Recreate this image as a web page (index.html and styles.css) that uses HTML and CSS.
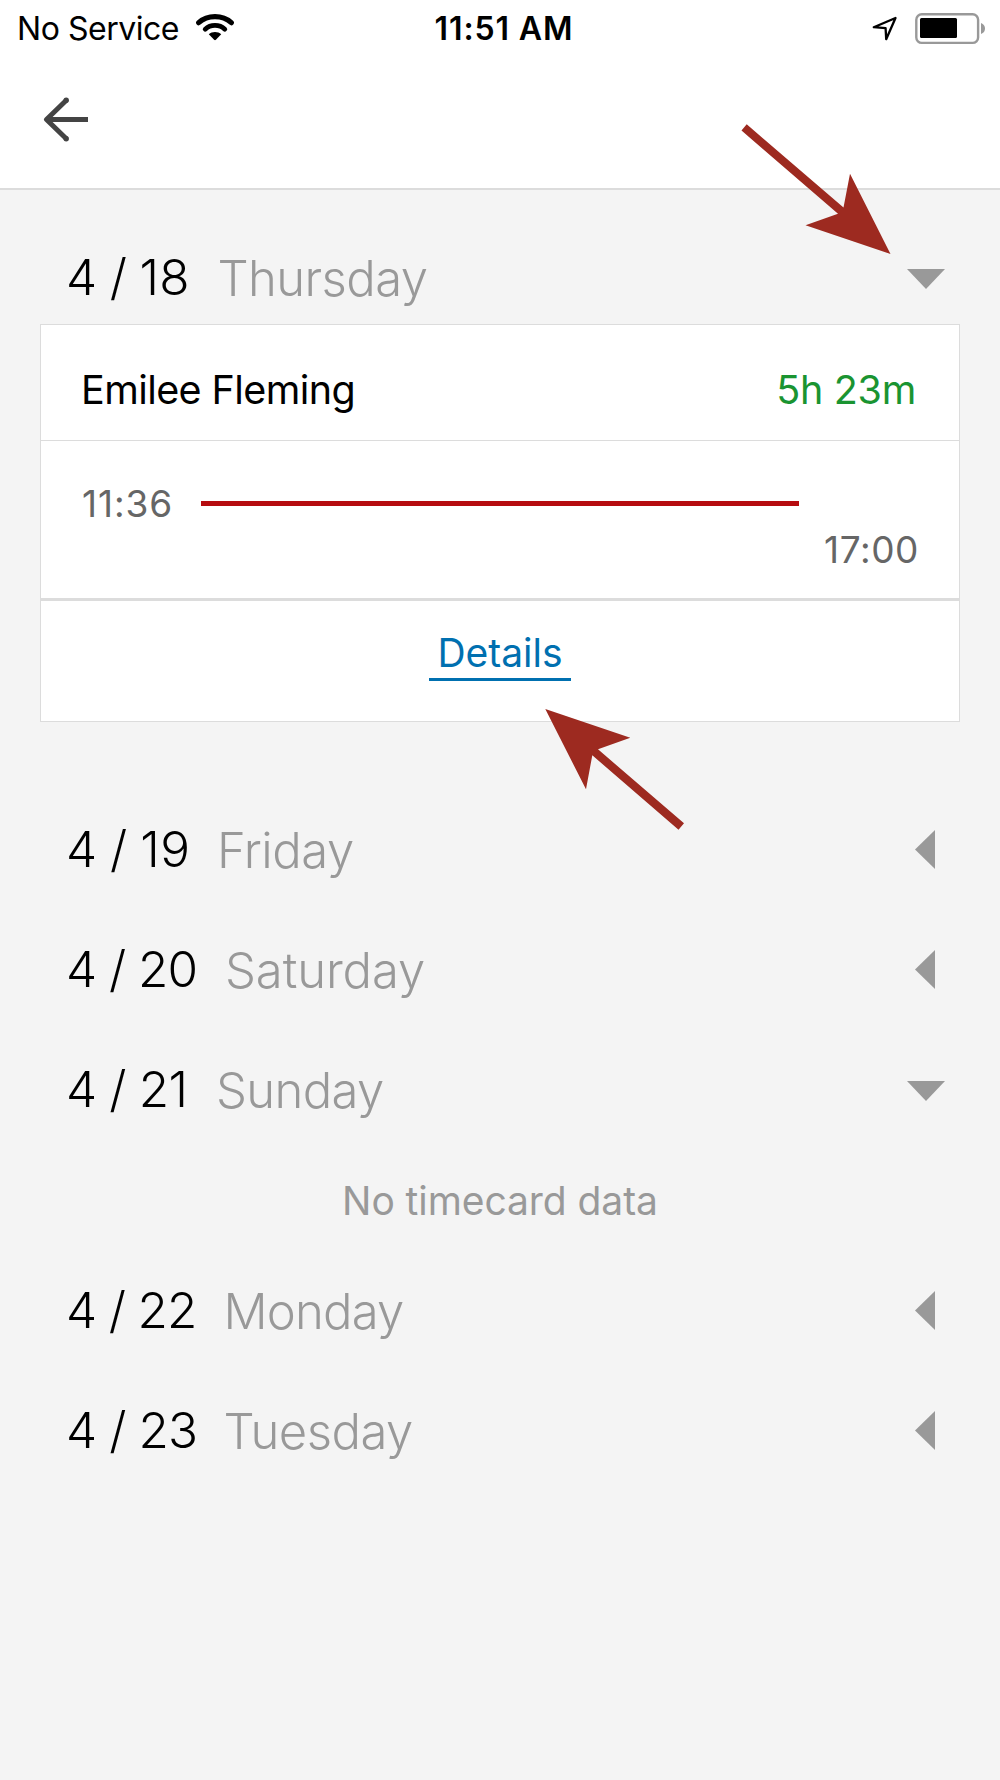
FILE: index.html
```
<!DOCTYPE html>
<html lang="en">
<head>
<meta charset="utf-8">
<title>Timecards</title>
<link rel="stylesheet" href="styles.css">
</head>
<body>
<div class="screen">
  <header class="header">
    <div class="status">
      <div class="status-left">
        <span class="carrier">No Service</span>
        <svg class="wifi" width="38" height="28" viewBox="0 0 38 28">
          <g fill="none" stroke="#000">
            <path d="M2.7 9.7C11.5 1.7 26.5 1.7 35.3 9.7" stroke-width="5.2" stroke-linecap="round"/>
            <path d="M9.2 16.2C14.5 11.2 23.5 11.2 28.8 16.2" stroke-width="4.8" stroke-linecap="round"/>
          </g>
          <path d="M12.8 21.2C16 18.2 22 18.2 25.2 21.2L19.9 26.8Q19 27.6 18.1 26.8Z"/>
        </svg>
      </div>
      <span class="clock">11:51 AM</span>
      <div class="status-right">
        <svg class="location" width="26" height="26" viewBox="0 0 26 26">
          <path d="M23.5 2L1.8 11.2L13.6 12.2L14.2 23.2Z" fill="none" stroke="#000" stroke-width="2.3" stroke-linejoin="round"/>
        </svg>
        <svg class="battery" width="72" height="32" viewBox="0 0 72 32">
          <rect x="1.3" y="1.3" width="61.8" height="28.6" rx="5.5" fill="none" stroke="#999" stroke-width="2.4"/>
          <rect x="5" y="5" width="37" height="20" rx="1.5"/>
          <path d="M66 10Q70 11.5 70 15.5T66 21Z" fill="#999"/>
        </svg>
      </div>
    </div>
    <nav class="nav">
      <svg class="back" width="46" height="46" viewBox="0 0 46 46">
        <path d="M23.6 3L3.5 22.5L23.6 42M3.5 22.5H45" fill="none" stroke="#444" stroke-width="5" stroke-linejoin="round"/>
        <circle cx="23.2" cy="3.2" r="2.7" fill="#444"/><circle cx="23.2" cy="41.8" r="2.7" fill="#444"/>
      </svg>
    </nav>
  </header>

  <main class="days">
    <section class="entry entry-open">
      <div class="row">
        <span class="date d18">4 / 18</span><span class="day thu">Thursday</span>
        <svg class="caret" width="38" height="20" viewBox="0 0 38 20"><path d="M0 0H38L19 20Z"/></svg>
      </div>
      <div class="card">
        <div class="person">
          <span class="name">Emilee Fleming</span>
          <span class="total">5h 23m</span>
        </div>
        <div class="shift">
          <span class="start">11:36</span>
          <span class="bar"></span>
          <span class="end">17:00</span>
        </div>
        <div class="more"><a class="details">Details</a></div>
      </div>
    </section>
    <section class="entry">
      <div class="row">
        <span class="date d19">4 / 19</span><span class="day fri">Friday</span>
        <svg class="caret caret-left" width="20" height="39" viewBox="0 0 20 39"><path d="M20 0V39L0 19.5Z"/></svg>
      </div>
    </section>
    <section class="entry">
      <div class="row">
        <span class="date d20">4 / 20</span><span class="day sat">Saturday</span>
        <svg class="caret caret-left" width="20" height="39" viewBox="0 0 20 39"><path d="M20 0V39L0 19.5Z"/></svg>
      </div>
    </section>
    <section class="entry">
      <div class="row">
        <span class="date d21">4 / 21</span><span class="day sun">Sunday</span>
        <svg class="caret caret-low" width="38" height="20" viewBox="0 0 38 20"><path d="M0 0H38L19 20Z"/></svg>
      </div>
      <p class="empty">No timecard data</p>
    </section>
    <section class="entry">
      <div class="row">
        <span class="date d22">4 / 22</span><span class="day mon">Monday</span>
        <svg class="caret caret-left" width="20" height="39" viewBox="0 0 20 39"><path d="M20 0V39L0 19.5Z"/></svg>
      </div>
    </section>
    <section class="entry">
      <div class="row">
        <span class="date d23">4 / 23</span><span class="day tue">Tuesday</span>
        <svg class="caret caret-left" width="20" height="39" viewBox="0 0 20 39"><path d="M20 0V39L0 19.5Z"/></svg>
      </div>
    </section>
  </main>

  <!-- pointers drawn over the screen -->
  <svg class="pointers" width="1000" height="1780" viewBox="0 0 1000 1780">
    <path d="M746.7 124.3L843.5 207.5L850 173.7L890.5 254L805.5 225.3L838 213.7L741.5 130.5Z"/>
    <path d="M545.3 709L630.3 737.7L598 749.3L684 823.3L678.5 829.7L592.3 755.3L586 789.3Z"/>
  </svg>
</div>
</body>
</html>
```
FILE: styles.css
```
* { box-sizing: border-box; }
body { margin: 0; background: #f4f4f4; }
svg { display: block; flex: none; }

.screen {
  position: relative;
  width: 1000px;
  height: 1780px;
  overflow: hidden;
  background: #f4f4f4;
  color: #000;
  font-family: Inter, "Liberation Sans", sans-serif;
  white-space: nowrap;
}

/* header */
.header { height: 190px; background: #fff; border-bottom: 2px solid #dcdcdc; }
.status {
  display: grid;
  grid-template-columns: 1fr auto 1fr;
  height: 56px;
  padding: 0 13px 0 17px;
  font-size: 32px;
  line-height: 58px;
}
.status-left, .status-right { display: flex; align-items: flex-start; }
.status-right { justify-content: flex-end; }
.carrier { width: 179px; letter-spacing: -0.47px; }
.wifi { margin-top: 13px; }
.clock { padding-left: 4px; font-weight: 600; letter-spacing: 0.89px; }
.location { margin: 16px 17px 0 0; }
.battery { margin-top: 13px; }
.nav { padding: 41px 0 0 43px; }

/* day list */
.days { padding-top: 40px; }
.entry { margin-bottom: 26px; }
.entry-open { margin-bottom: 80px; }
.row { display: flex; align-items: center; height: 94px; padding: 0 55px 0 66px; font-weight: 300; }
.date { font-size: 49.5px; line-height: 60px; }
.day { font-size: 49px; line-height: 60px; padding-top: 4px; color: #999; }
.caret { margin-left: auto; fill: #999; }
.caret-left { margin-right: 10px; }
.entry-open .caret, .caret-low { margin-top: 3px; }

.d18 { width: 151.5px; letter-spacing: 0.3px; word-spacing: -2px; }
.d19 { width: 151px; letter-spacing: 0.5px; word-spacing: -2px; }
.d20 { width: 159px; letter-spacing: -0.8px; word-spacing: -0.5px; }
.d21 { width: 150px; letter-spacing: -0.6px; word-spacing: -0.5px; }
.d22 { width: 157.5px; letter-spacing: -0.9px; word-spacing: -0.5px; }
.d23 { width: 157.5px; letter-spacing: -0.7px; word-spacing: -0.5px; }
.thu { letter-spacing: -0.6px; }
.fri { letter-spacing: -0.47px; }
.sat { letter-spacing: -0.11px; }
.sun { letter-spacing: -0.65px; }
.mon { letter-spacing: -0.82px; }
.tue { letter-spacing: -0.53px; }

/* timecard */
.card { height: 398px; margin: 0 40px; border: 1px solid #dcdcdc; background: #fff; }
.person {
  display: flex;
  justify-content: space-between;
  height: 116px;
  padding: 7px 43px 0 40px;
  border-bottom: 1px solid #dcdcdc;
  font-size: 39.5px;
  line-height: 116px;
}
.name { letter-spacing: -0.58px; }
.total { letter-spacing: -0.29px; color: #1a9431; }
.shift {
  display: grid;
  grid-template-columns: 119px 598px 1fr;
  grid-template-rows: 46px 46px;
  height: 160px;
  padding: 40px 40px 0 41px;
  border-bottom: 3px solid #dcdcdc;
  color: #666;
  font-size: 37px;
  line-height: 46px;
}
.start { letter-spacing: 0.9px; }
.bar { height: 5px; margin-top: 20px; background: #b60c10; }
.end { grid-column: 3; grid-row: 2; justify-self: end; letter-spacing: 0.56px; }
.more { display: flex; justify-content: center; padding-top: 20px; }
.details {
  width: 142px;
  height: 60px;
  border-bottom: 3px solid #0070b0;
  color: #0070b0;
  font-size: 39px;
  line-height: 63px;
  text-align: center;
}
.empty { margin: 0; height: 101px; color: #999; font-size: 39px; line-height: 129px; text-align: center; letter-spacing: -0.07px; }

.pointers { position: absolute; top: 0; left: 0; fill: #9d2a20; pointer-events: none; }
```
